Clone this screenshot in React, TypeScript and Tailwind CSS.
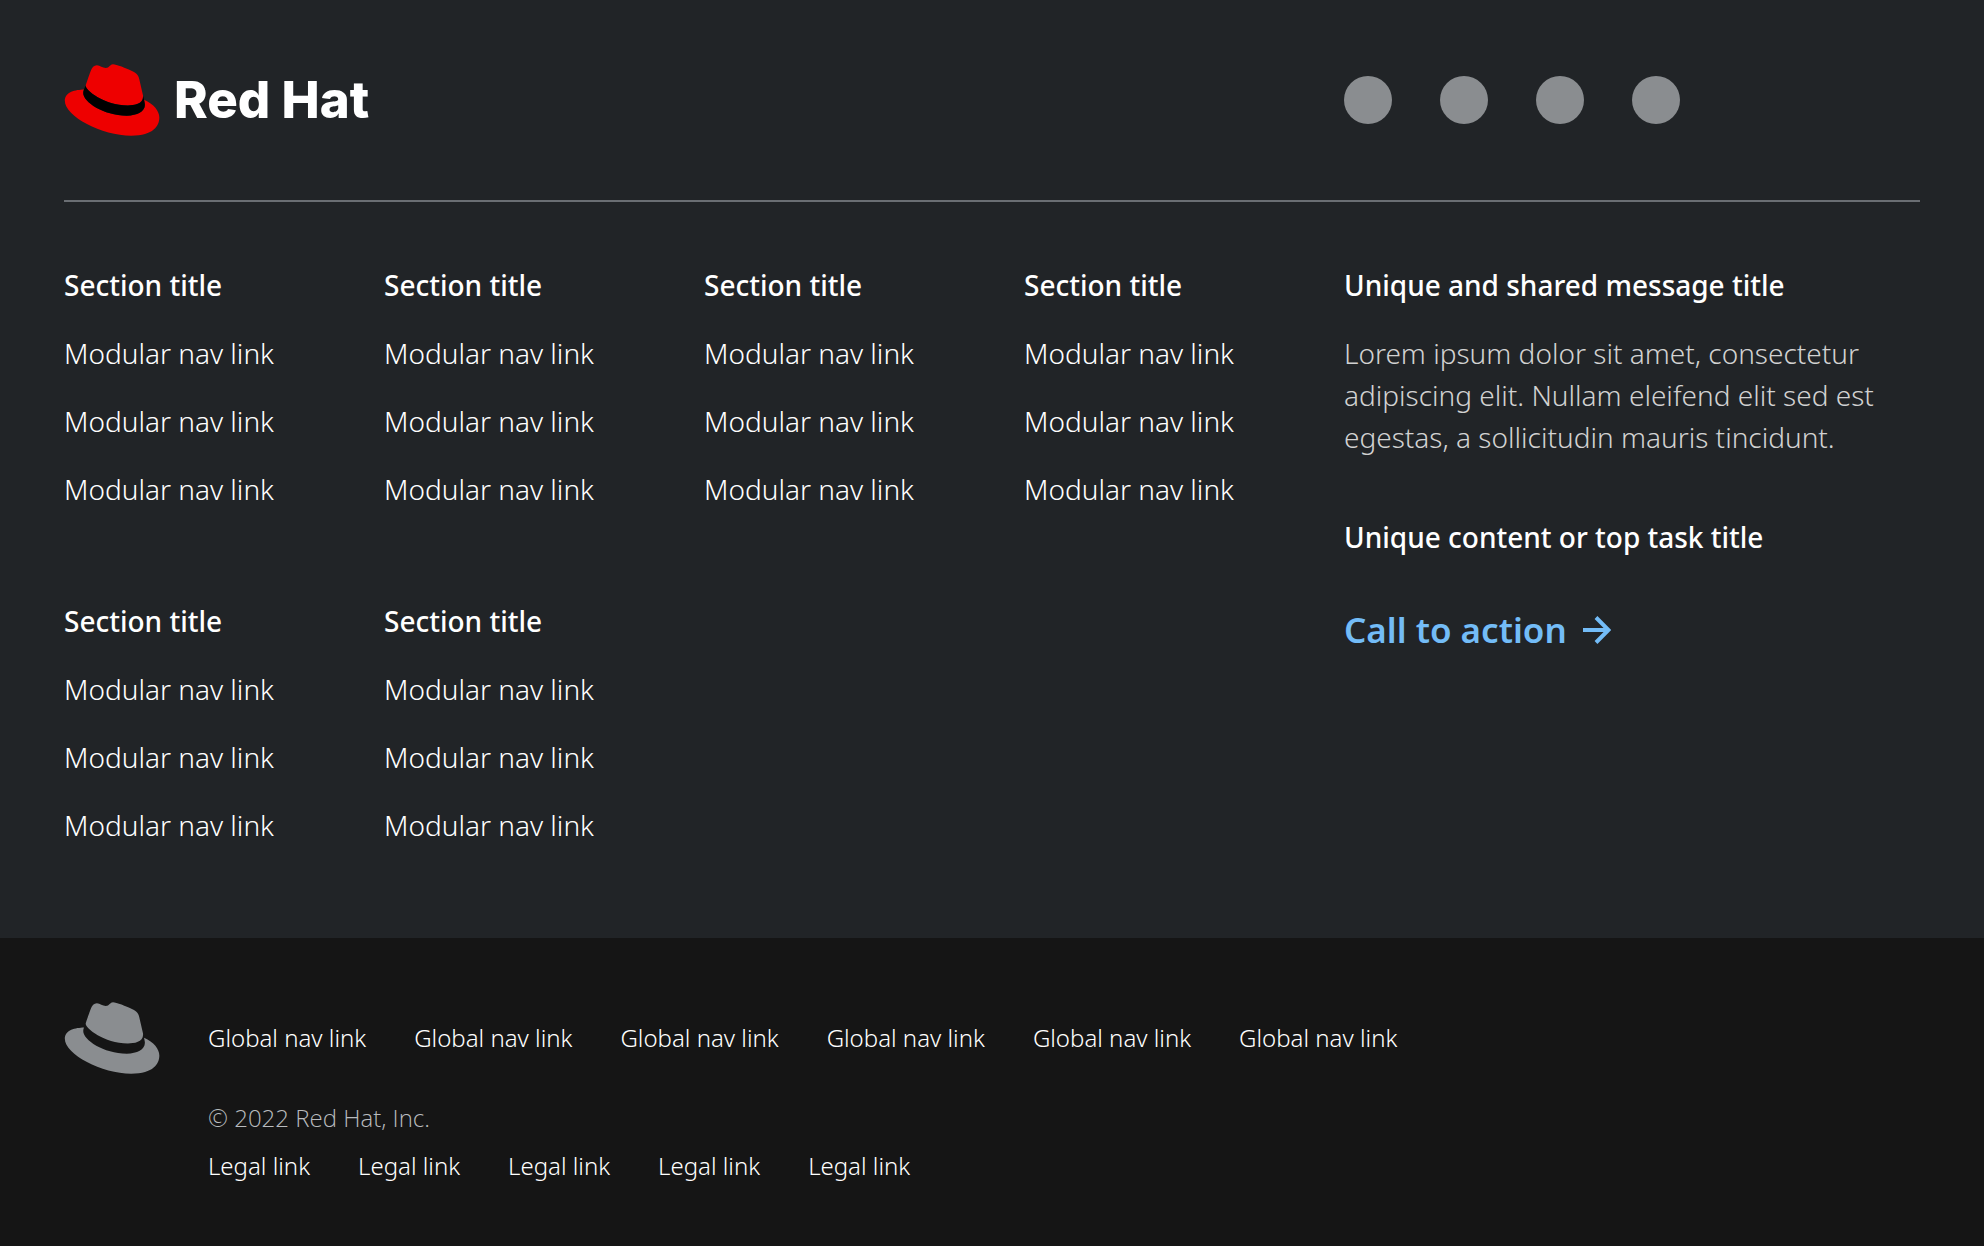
const sections = [1, 2, 3, 4, 5, 6];
const sectionLinks = [1, 2, 3];
const socialLinks = ['Social link 1', 'Social link 2', 'Social link 3', 'Social link 4'];
const globalLinks = [1, 2, 3, 4, 5, 6];
const legalLinks = [1, 2, 3, 4, 5];

const FEDORA =
  'M127.47,83.49c12.51,0,30.61-2.58,30.61-17.46a14,14,0,0,0-.31-3.42l-7.45-32.36c-1.72-7.12-3.23-10.35-15.73-16.6C124.89,8.69,103.76.5,97.51.5,91.69.5,90,8,83.06,8c-6.68,0-11.64-5.6-17.89-5.6-6,0-9.91,4.09-12.93,12.5,0,0-8.41,23.72-9.49,27.16A6.43,6.43,0,0,0,42.53,44c0,9.22,36.3,39.45,84.94,39.45M160,72.07c1.73,8.19,1.73,9.05,1.73,10.13,0,14-15.74,21.77-36.43,21.77C78.54,104,37.58,76.6,37.58,58.49a18.45,18.45,0,0,1,1.51-7.33C22.27,52,.5,55,.5,74.22c0,31.48,74.59,70.28,133.65,70.28,45.28,0,56.7-20.48,56.7-36.65,0-12.72-11-27.16-30.83-35.78';
const BAND =
  'M160,72.07c1.73,8.19,1.73,9.05,1.73,10.13,0,14-15.74,21.77-36.43,21.77C78.54,104,37.58,76.6,37.58,58.49a18.45,18.45,0,0,1,1.51-7.33l3.66-9.06A6.43,6.43,0,0,0,42.53,44c0,9.22,36.3,39.45,84.94,39.45,12.51,0,30.61-2.58,30.61-17.46a14,14,0,0,0-.31-3.42Z';

function Hat({ banded = false }: { banded?: boolean }) {
  return (
    <svg viewBox="0 0 191 145" className="h-[72px] w-24 shrink-0" aria-hidden="true">
      <path d={FEDORA} fill={banded ? '#ee0000' : '#8a8d90'} />
      {banded && <path d={BAND} fill="#000000" />}
    </svg>
  );
}

function Title({ children }: { children: string }) {
  return <h3 className="text-[28px] leading-[42px] font-medium">{children}</h3>;
}

function Section() {
  return (
    <section className="flex flex-col gap-[26px]">
      <Title>Section title</Title>
      <ul className="flex flex-col gap-[26px]">
        {sectionLinks.map((n) => (
          <li key={n} className="text-[28px] leading-[42px] font-light whitespace-nowrap">
            <a href="#" className="hover:underline">Modular nav link</a>
          </li>
        ))}
      </ul>
    </section>
  );
}

export default function App() {
  return (
    <footer className="flex min-h-screen flex-col bg-[#151515] font-['Noto_Sans',sans-serif] text-white">
      <div className="bg-[#212427] px-16 pt-16 pb-[92px]">
        <div className="flex items-center gap-16 border-b-2 border-[#6a6e73] pb-16">
          <div className="flex-1">
            <a href="#" className="flex w-fit items-center gap-[14px]" aria-label="Red Hat">
              <Hat banded />
              <span className="font-['Inter',sans-serif] text-[51px] leading-[72px] font-extrabold">Red Hat</span>
            </a>
          </div>
          <ul className="flex w-[576px] gap-12">
            {socialLinks.map((label) => (
              <li key={label}>
                <a href="#" aria-label={label} className="block size-12 rounded-full bg-[#8a8d90]" />
              </li>
            ))}
          </ul>
        </div>

        <div className="flex gap-16 pt-[62px]">
          <nav aria-label="Sections" className="grid flex-1 grid-cols-4 gap-x-16 gap-y-[90px]">
            {sections.map((n) => (
              <Section key={n} />
            ))}
          </nav>
          <div className="w-[576px]">
            <Title>Unique and shared message title</Title>
            <p className="mt-[26px] mb-[58px] text-[28px] leading-[42px] font-light text-[#d2d2d2]">
              Lorem ipsum dolor sit amet, consectetur adipiscing elit. Nullam eleifend elit sed est
              egestas, a sollicitudin mauris tincidunt.
            </p>
            <Title>Unique content or top task title</Title>
            <a
              href="#"
              className="mt-12 flex w-fit items-center gap-4 text-[35px] leading-[48px] font-semibold text-[#73bcf7]"
            >
              Call to action
              <svg viewBox="0 0 28 28" className="size-7" fill="none" stroke="currentColor" strokeWidth="4" aria-hidden="true">
                <path d="M0 14H25M13 1.5L25.5 14L13 26.5" />
              </svg>
            </a>
          </div>
        </div>
      </div>

      <div className="flex gap-12 px-16 py-16">
        <Hat />
        <div>
          <nav aria-label="Global" className="flex h-[72px] items-center">
            <ul className="flex gap-12">
              {globalLinks.map((n) => (
                <li key={n} className="text-2xl leading-9 font-light whitespace-nowrap">
                  <a href="#" className="hover:underline">Global nav link</a>
                </li>
              ))}
            </ul>
          </nav>
          <p className="mt-[26px] font-['Open_Sans',sans-serif] text-2xl leading-9 font-light text-[#b8bbbe]">
            © 2022 Red Hat, Inc.
          </p>
          <ul className="mt-3 flex gap-12">
            {legalLinks.map((n) => (
              <li key={n} className="text-2xl leading-9 font-light whitespace-nowrap">
                <a href="#" className="hover:underline">Legal link</a>
              </li>
            ))}
          </ul>
        </div>
      </div>
    </footer>
  );
}
